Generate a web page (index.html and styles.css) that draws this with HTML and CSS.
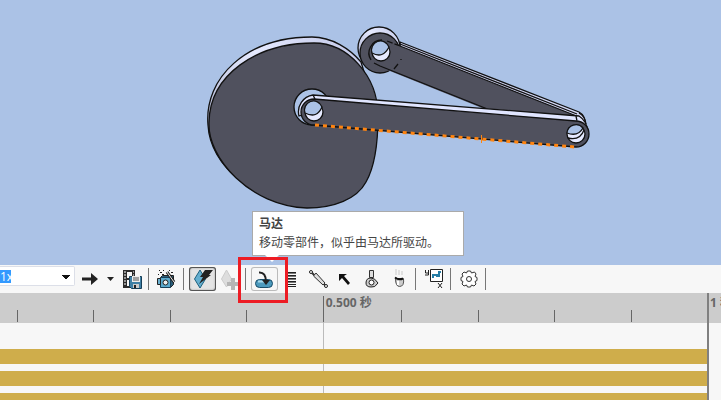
FILE: index.html
```html
<!DOCTYPE html>
<html lang="zh-CN">
<head>
  <meta charset="UTF-8" />
  <meta name="viewport" content="width=device-width, initial-scale=1.0"/>
  <title>运动算例</title>
  <link rel="stylesheet" href="styles.css">
</head>
<body>
  <!-- Model view -->
  <main class="stage">
    <svg class="model" viewBox="0 0 721 265" role="img" aria-label="凸轮连杆机构">
      <defs>
        <linearGradient id="rim" x1="0" y1="1" x2="1" y2="0">
          <stop offset="0" stop-color="#9aa0c0"/>
          <stop offset="0.6" stop-color="#e6eaff"/>
          <stop offset="1" stop-color="#bfc5e6"/>
        </linearGradient>
      </defs>
      <g stroke="#111" stroke-width="1.3" stroke-linejoin="round">
        <!-- cam -->
        <path fill="url(#rim)" d="M208 125C204 78 246 37 312 37C332 37 350 49 361 62L365 75L240 180C220 165 209 145 208 125Z"/>
        <path fill="#50515e" d="M209 122C210 75 256 43 314 43C347 43 378 75 378 116C378 145 374 168 366 182C357 199 334 208 307 208C250 206 207 158 209 122Z"/>
        <!-- follower arm -->
        <path fill="#d4d8f6" d="M400 42L579 112Q586 116 585 125L400 52Z"/>
        <path fill="none" d="M400 44L577 114"/>
        <circle fill="url(#rim)" cx="379" cy="48" r="21"/>
        <circle fill="#50515e" cx="380" cy="53" r="20"/>
        <path fill="#50515e" stroke="none" d="M387 43L400 46L579 117L487 110L375 65Z"/>
        <path fill="none" d="M374 63L380 66L490 110M400 46L579 117"/>
        <path fill="none" d="M387 41L400 46" stroke-dasharray="6 2"/>
        <path fill="none" d="M382 40A13 13 0 0 0 371 60"/>
        <path fill="none" d="M394 69L398 64M401 60V59"/>
        <circle fill="#e6eaff" cx="381" cy="52" r="9"/>
        <path fill="#abc2e6" d="M372 53Q383 59 389 47A9 9 0 0 0 372 53Z"/>
        <!-- driven link -->
        <circle fill="#abc2e6" cx="312" cy="107" r="18"/>
        <path fill="#e0e5ff" d="M299 116A17 17 0 0 1 313 95L579 116Q587 121 588 132L576 124L313 112Z"/>
        <path fill="#50515e" d="M314 99L576 121A13 13 0 0 1 576 147L314 125A13 13 0 0 1 314 99Z"/>
        <path fill="none" d="M576 116L577 121M313 95L315 99M579 113Q585 116 586 124"/>
        <circle fill="#e6eaff" cx="314" cy="112" r="9"/>
        <path fill="#abc2e6" d="M305 113Q317 119 322 107A9 9 0 0 0 305 113Z"/>
        <circle fill="#e6eaff" cx="576" cy="134" r="9"/>
        <path fill="#abc2e6" d="M567 133Q578 137 583 128A9 9 0 0 0 567 133Z"/>
        <path fill="none" d="M568 138Q580 141 584 130"/>
      </g>
      <path stroke="#ff8410" stroke-width="3" stroke-dasharray="4 4" d="M315 125L575 147"/>
      <path stroke="#ff8410" d="M481.500 135V143"/>
    </svg>
  </main>

  <!-- Motion toolbar -->
  <nav class="toolbar" aria-label="运动工具">
    <select class="speed" aria-label="播放速度">
      <option>1x</option>
    </select>
    <button class="tool tool-mode" aria-label="播放模式">
      <svg viewBox="0 0 30 28"><path d="M7 12.500h9V8l7 6-7 6v-4.500H7Z" fill="#222"/></svg>
    </button>
    <button class="tool tool-caret" aria-label="更多模式">
      <svg viewBox="0 0 11 28"><path d="M2 12h7l-3.500 4Z" fill="#222"/></svg>
    </button>
    <button class="tool tool-save" aria-label="保存动画">
      <svg viewBox="0 0 32 28">
        <path d="M7 5h12v18H7Z" fill="#2b2b2b"/>
        <path d="M11 7h5v6h-5ZM11 15h5v6h-5Z" fill="#f7f7f7"/>
        <path d="M8 7h2M8 10h2M8 13h2M8 16h2M8 19h2M17 7h1M17 10h1" stroke="#fff"/>
        <path d="M13.500 11.500h12v12h-10l-2-2Z" fill="#3f80a5" stroke="#173f58"/>
        <path d="M16 11h8v6h-8Z" fill="#eee"/>
        <path d="M17 13h6M17 15h6" stroke="#555"/>
        <path d="M17 19h6v4h-6Z" fill="#ccc"/>
        <path d="M18 20h2v3h-2Z" fill="#222"/>
      </svg>
    </button>
    <span class="divider"></span>
    <button class="tool tool-wide" aria-label="动画向导">
      <svg viewBox="0 0 34 28">
        <path d="M11.500 12.500l2-2h11v9l-3 3Z" fill="#2a5e7a" stroke="#222"/>
        <path d="M11.500 12.500h10v10h-10Z" fill="#5aa9cd" stroke="#173f58"/>
        <circle cx="16.500" cy="17.500" r="2.500" fill="#eee" stroke="#222"/>
        <path d="M8.500 13.500h3v6h-3Z" fill="#6ab0d0" stroke="#222"/>
        <path d="M18 7l7 10" stroke="#222" stroke-width="3"/>
        <path d="M18 7l7 10" stroke="#eee"/>
        <path d="M11 7.500h2M14 5.500h1M13 9.500h2M20 5.500h1M22 7.500h2M9 9.500h1M10 5.500h1" stroke="#222"/>
      </svg>
    </button>
    <span class="divider"></span>
    <button class="tool tool-boxed is-pressed" aria-label="自动键码" aria-pressed="true">
      <svg viewBox="0 0 27 28">
        <path d="M11 5L16.500 14 11 23 5.500 14Z" fill="#65afd0" stroke="#1d617f"/>
        <path d="M16 5h8l-4 5h2L10 19l4-7h-3Z" fill="#222"/>
      </svg>
    </button>
    <button class="tool tool-key" aria-label="添加键码" disabled>
      <svg viewBox="0 0 29 28">
        <path d="M10.500 5l5 9-5 8-5-8Z" fill="#ddd" stroke="#ccc"/>
        <path d="M15 13h4v4h4v4h-4v4h-4v-4h-4v-4h4Z" fill="#b5b5b5"/>
      </svg>
    </button>
    <span class="divider"></span>
    <div class="motor">
      <button class="tool tool-boxed" aria-label="马达" aria-describedby="motorTip">
        <svg viewBox="0 0 27 28">
          <rect x="4.500" y="14.500" width="17" height="8" rx="4" fill="#4c9abd" stroke="#194d69"/>
          <path d="M7 16.500h10" stroke="#a8d8eb" stroke-width="2"/>
          <path d="M8 7.500Q15 7 15 17" fill="none" stroke="#222" stroke-width="2"/>
          <path d="M11 15h8l-4 5Z" fill="#222"/>
        </svg>
      </button>
      <span class="highlight"></span>
      <div class="tip" id="motorTip" role="tooltip">
        <strong>马达</strong>
        <p>移动零部件，似乎由马达所驱动。</p>
      </div>
    </div>
    <button class="tool" aria-label="弹簧">
      <svg viewBox="0 0 27 28">
        <path d="M7 7.500h11M9 10.500h9M9 13.500h9M9 16.500h9M9 19.500h9M7 21.500h11" stroke="#222"/>
        <path d="M8 8.500h10M9 11.500h9M9 14.500h9M9 17.500h9" stroke="#777"/>
      </svg>
    </button>
    <button class="tool" aria-label="阻尼">
      <svg viewBox="0 0 27 28">
        <path d="M6 7l15 14" stroke="#333" stroke-width="2"/>
        <path d="M8.500 11l2.500-3 9 10-2 2Z" fill="#ddd" stroke="#333"/>
        <circle cx="6" cy="7" r="1.500" fill="#fff" stroke="#222"/>
        <circle cx="21" cy="21" r="1.500" fill="#fff" stroke="#222"/>
      </svg>
    </button>
    <button class="tool" aria-label="力">
      <svg viewBox="0 0 27 28"><path d="M7 9h8l-3 2 6 7-2 2-6-7-3 3Z" fill="#111"/></svg>
    </button>
    <button class="tool" aria-label="接触">
      <svg viewBox="0 0 27 28">
        <path d="M10.500 5.500h4v7h-4Z" fill="#ddd" stroke="#333"/>
        <path d="M7 18q0-5 5-5 4 0 7 5-3 5-7 4-5 0-5-4Z" fill="#ccc" stroke="#222"/>
        <circle cx="12.500" cy="17.500" r="2.500" fill="#fff" stroke="#222"/>
      </svg>
    </button>
    <button class="tool" aria-label="引力">
      <svg viewBox="0 0 27 28">
        <path d="M10 4v6M13 5v5M16 6v4" stroke="#e0e0e0" stroke-width="2"/>
        <path d="M9.500 13.500h8q1 8-4 8-4 0-4-8Z" fill="#ccc" stroke="#555"/>
        <path d="M9 12.500q4 3 8 1" fill="none" stroke="#111" stroke-width="2"/>
        <path d="M12 16v4" stroke="#fff" stroke-width="2"/>
      </svg>
    </button>
    <span class="divider divider-gap"></span>
    <button class="tool tool-wide" aria-label="结果和图解">
      <svg viewBox="0 0 34 28">
        <path d="M14.500 4.500h12v12h-12Z" fill="#fff" stroke="#222"/>
        <path d="M17 13v-3h4v1h2V7h2" fill="none" stroke="#267da5" stroke-width="2"/>
        <path d="M9.500 5v3h3M12.500 5v5H9M22 18l4 5M26 18l-4 5" fill="none" stroke="#222"/>
      </svg>
    </button>
    <span class="divider"></span>
    <button class="tool tool-wide" aria-label="运动算例属性">
      <svg viewBox="0 0 34 28">
        <path d="M15.500 8l1-2h3l1 2 3-1 1.500 2-1 2.500 2 1v3l-2 1 1 2.500-2 2-2.500-1-1 2h-3l-1-2-2.500 1-2-2 1-2.500-2-1v-3l2-1-1-2.500 2-2Z" fill="#fff" stroke="#333"/>
        <circle cx="18" cy="14" r="2.500" fill="#fff" stroke="#333"/>
      </svg>
    </button>
    <span class="divider"></span>
  </nav>

  <!-- Timeline -->
  <section class="timeline">
    <div class="timeline-main">
      <div class="ruler">
        <span class="tick"></span>
        <span class="tick"></span>
        <span class="tick"></span>
        <span class="tick"></span>
        <span class="tick tick-major">0.500 秒</span>
        <span class="tick"></span>
        <span class="tick"></span>
        <span class="tick"></span>
        <span class="tick"></span>
      </div>
      <div class="tracks">
        <div class="bar"></div>
        <div class="bar"></div>
        <div class="bar"></div>
      </div>
    </div>
    <div class="timeline-end">
      <div class="ruler"><span class="end-label">1 秒</span></div>
    </div>
  </section>
</body>
</html>
```
FILE: styles.css
```css
* { box-sizing: border-box; }

body {
  margin: 0;
  min-height: 100vh;
  display: flex;
  flex-direction: column;
  overflow: hidden;
  font-family: "Open Sans", "Noto Sans CJK SC", sans-serif;
  font-size: 12px;
  background: #f7f7f7;
  color: #333;
}

.stage {
  background: #abc2e6;
}

.model {
  display: block;
  width: 100%;
}

/* Toolbar */
.toolbar {
  display: flex;
  align-items: center;
  height: 28px;
  background: #f7f7f7;
}

.speed {
  appearance: none;
  width: 75px;
  height: 20px;
  margin: 0 0 6px;
  padding: 0;
  border: 1px solid #dcdfe8;
  border-left: none;
  border-radius: 0 2px 2px 0;
  font-family: "Open Sans", sans-serif;
  font-size: 12px;
  color: #fff;
  background:
    linear-gradient(#3399ff, #3399ff) 0 3px / 11px 13px no-repeat,
    conic-gradient(from -45deg at 50% 100%, #111 90deg, transparent 0) 62px 8px / 8px 4px no-repeat,
    #fff;
}

.tool {
  flex: none;
  width: 27px;
  height: 28px;
  padding: 0;
  border: none;
  background: none;
}

.tool svg {
  display: block;
  width: 100%;
}

.tool-mode { width: 30px; }
.tool-caret { width: 11px; }
.tool-save { width: 32px; }
.tool-key { width: 29px; }
.tool-wide { width: 34px; }

.divider {
  flex: none;
  width: 1px;
  height: 22px;
  background: #777;
}

.divider-gap {
  margin-left: 2px;
}

.tool-boxed {
  height: 24px;
  margin-left: 5px;
  border-radius: 3px;
  box-shadow: inset 0 0 0 1px #bbb;
  overflow: hidden;
}

.tool-boxed svg {
  margin-top: -2px;
}

.is-pressed {
  background: #e4e4e4;
  box-shadow: inset 0 0 0 1px #555, inset 0 0 2px 1px #999;
}

.motor {
  position: relative;
  display: flex;
}

.highlight {
  position: absolute;
  top: -10px;
  left: -8px;
  width: 50px;
  height: 46px;
  border: 3px solid #ed1c24;
  z-index: 2;
  pointer-events: none;
}

.tip {
  position: absolute;
  bottom: 35px;
  left: 6px;
  width: 212px;
  padding: 2px 6px 3px;
  border: 1px solid #aaa;
  background: #fff;
  line-height: 19px;
  white-space: nowrap;
  color: #444;
}

.tip::after {
  content: "";
  position: absolute;
  top: 100%;
  left: 12px;
  border: 7px solid transparent;
  border-top-color: #fff;
  border-bottom: none;
}

.tip strong,
.tip p {
  display: block;
  margin: 0;
}

/* Timeline */
.timeline {
  flex: 1;
  display: flex;
}

.timeline-main {
  flex: 1;
  border-right: 2px solid #808080;
}

.timeline-end {
  width: 12px;
  overflow: hidden;
}

.ruler {
  display: flex;
  align-items: flex-end;
  height: 30px;
  padding-bottom: 1px;
  background: #ccc;
  font-weight: bold;
  color: #666;
  white-space: nowrap;
}

.timeline-main .ruler {
  padding-left: 17px;
}

.tick {
  flex: 1;
  height: 12px;
  border-left: 1px solid #666;
}

.tick-major {
  position: relative;
  height: 26px;
  padding-left: 2px;
  line-height: 14px;
}

/* guide line down through the tracks */
.tick-major::after {
  content: "";
  position: absolute;
  top: 100%;
  left: -1px;
  width: 1px;
  height: 78px;
  background: #bbb;
}

.end-label {
  align-self: flex-start;
  padding: 3px 0 0 1px;
  line-height: 14px;
}

.tracks {
  display: grid;
  gap: 7px;
  padding-top: 26px;
}

.bar {
  position: relative;
  z-index: 1;
  height: 15px;
  background: #cfad4b;
}
```
